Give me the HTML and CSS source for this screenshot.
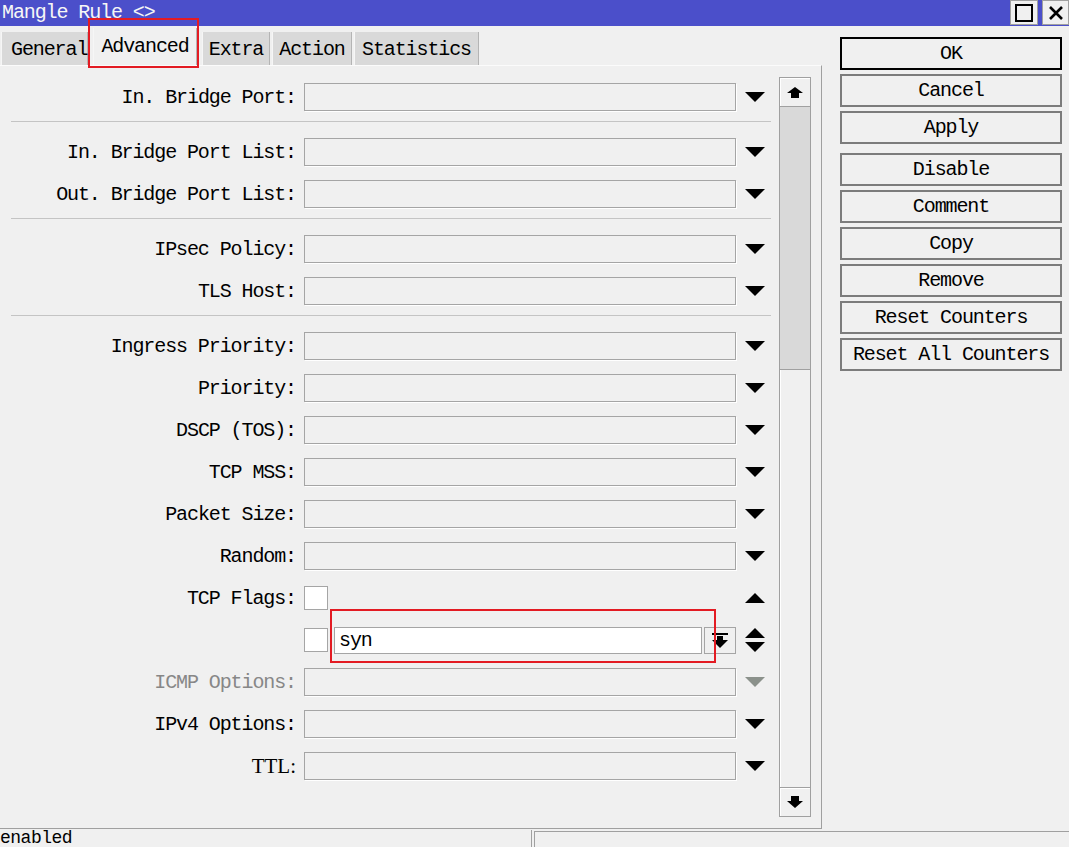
FILE: index.html
```html
<!DOCTYPE html>
<html>
<head>
<meta charset="utf-8">
<title>Mangle Rule</title>
<link rel="stylesheet" href="styles.css">
</head>
<body>
<div class="window">
  <div class="titlebar">
    <span class="title">Mangle Rule &lt;&gt;</span>
    <div class="winbtns">
      <div class="winbtn"><svg width="18" height="18" viewBox="0 0 18 18"><rect x="1" y="1" width="16" height="16" fill="none" stroke="#000" stroke-width="2"/></svg></div>
      <div class="winbtn close"><svg width="16" height="16" viewBox="0 0 16 16"><path d="M2 2L14 14M14 2L2 14" stroke="#000" stroke-width="2.6"/></svg></div>
    </div>
  </div>

  <div class="main">
    <div class="left">
      <div class="tabs">
        <div class="tab t-general">General</div>
        <div class="tab active t-adv">Advanced</div>
        <div class="tab t-extra">Extra</div>
        <div class="tab t-action">Action</div>
        <div class="tab t-stats">Statistics</div>
      </div>
      <div class="panel">
        <div class="form">
          <div class="row"><div class="lbl">In. Bridge Port:</div><div class="field"></div><div class="arr"><span class="tri-down"></span></div></div>
          <div class="sep"></div>
          <div class="row"><div class="lbl">In. Bridge Port List:</div><div class="field"></div><div class="arr"><span class="tri-down"></span></div></div>
          <div class="row"><div class="lbl">Out. Bridge Port List:</div><div class="field"></div><div class="arr"><span class="tri-down"></span></div></div>
          <div class="sep"></div>
          <div class="row"><div class="lbl">IPsec Policy:</div><div class="field"></div><div class="arr"><span class="tri-down"></span></div></div>
          <div class="row"><div class="lbl">TLS Host:</div><div class="field"></div><div class="arr"><span class="tri-down"></span></div></div>
          <div class="sep"></div>
          <div class="row"><div class="lbl">Ingress Priority:</div><div class="field"></div><div class="arr"><span class="tri-down"></span></div></div>
          <div class="row"><div class="lbl">Priority:</div><div class="field"></div><div class="arr"><span class="tri-down"></span></div></div>
          <div class="row"><div class="lbl">DSCP (TOS):</div><div class="field"></div><div class="arr"><span class="tri-down"></span></div></div>
          <div class="row"><div class="lbl">TCP MSS:</div><div class="field"></div><div class="arr"><span class="tri-down"></span></div></div>
          <div class="row"><div class="lbl">Packet Size:</div><div class="field"></div><div class="arr"><span class="tri-down"></span></div></div>
          <div class="row"><div class="lbl">Random:</div><div class="field"></div><div class="arr"><span class="tri-down"></span></div></div>
          <div class="row"><div class="lbl">TCP Flags:</div><div class="check"></div><div class="spacer"></div><div class="arr"><span class="tri-up"></span></div></div>
          <div class="row"><div class="lbl"></div><div class="check"></div><div class="text-input">syn</div><div class="mini-btn"><svg width="16" height="15" viewBox="0 0 16 15"><rect x="0" y="0" width="16" height="2"/><rect x="5" y="3" width="6" height="4"/><polygon points="0,7 16,7 8,15"/></svg></div><div class="arr"><span class="updown"><span class="tri-up"></span><span class="tri-down"></span></span></div></div>
          <div class="row disabled"><div class="lbl">ICMP Options:</div><div class="field"></div><div class="arr"><span class="tri-down"></span></div></div>
          <div class="row"><div class="lbl">IPv4 Options:</div><div class="field"></div><div class="arr"><span class="tri-down"></span></div></div>
          <div class="row"><div class="lbl serif">TTL:</div><div class="field"></div><div class="arr"><span class="tri-down"></span></div></div>
        </div>
        <div class="scroll">
          <div class="sbtn"><svg width="16" height="11" viewBox="0 0 16 11"><polygon points="8,0 16,6 12,6 12,11 4,11 4,6 0,6"/></svg></div>
          <div class="track"><div class="track-top"></div><div class="thumb"></div></div>
          <div class="sbtn"><svg width="16" height="12" viewBox="0 0 16 12"><polygon points="4,0 12,0 12,5 16,5 8,12 0,5 4,5"/></svg></div>
        </div>
      </div>
    </div>
    <div class="btns">
      <div class="btn default">OK</div>
      <div class="btn">Cancel</div>
      <div class="btn">Apply</div>
      <div class="btn group">Disable</div>
      <div class="btn">Comment</div>
      <div class="btn">Copy</div>
      <div class="btn">Remove</div>
      <div class="btn">Reset Counters</div>
      <div class="btn">Reset All Counters</div>
    </div>
  </div>

  <div class="status">
    <div class="seg seg-left">enabled</div>
    <div class="seg seg-right"></div>
  </div>

  <div class="mark mark-tab"></div>
  <div class="mark mark-syn"></div>
</div>
</body>
</html>
```

FILE: styles.css
```css
* { box-sizing: border-box; }
html, body { margin: 0; padding: 0; }
body {
  width: 1069px;
  height: 847px;
  overflow: hidden;
  background: #f0f0f0;
  font-family: "Liberation Mono", "DejaVu Sans Mono", monospace;
  font-size: 20px;
  letter-spacing: -1.1px;
  color: #000;
}
.window {
  position: relative;
  width: 1069px;
  height: 847px;
  display: flex;
  flex-direction: column;
}

/* title bar */
.titlebar {
  flex: none;
  height: 26px;
  background: #4b4fca;
  display: flex;
  justify-content: space-between;
}
.title {
  color: #f6f6f6;
  padding-left: 2px;
  line-height: 25px;
}
.winbtns { display: flex; gap: 4px; }
.winbtn {
  width: 28px;
  height: 25px;
  background: #f0f0f0;
  border: 1px solid #a0a0a0;
  display: flex;
  align-items: center;
  justify-content: center;
}
.winbtn.close { width: 27px; }

/* main area */
.main { flex: none; height: 803px; display: flex; }
.left { width: 822px; display: flex; flex-direction: column; }

.tabs {
  height: 39px;
  display: flex;
  align-items: flex-end;
  padding-left: 1px;
}
.tab {
  height: 33px;
  background: #d9d9d9;
  border-left: 1px solid #f6f6f6;
  border-right: 1px solid #b4b4b4;
  line-height: 36px;
  text-align: center;
}
.tab.active {
  height: 37px;
  background: #f0f0f0;
  line-height: 38px;
}
.t-general { width: 87px; text-align: left; padding-left: 9px; }
.t-adv { width: 104px; margin-left: 5px; }
.t-extra { width: 68px; margin-left: 5px; }
.t-action { width: 80px; margin-left: 2px; }
.t-stats { width: 125px; margin-left: 2px; }

.panel {
  height: 764px;
  border-top: 1px solid #fbfbfb;
  border-right: 1px solid #a0a0a0;
  border-bottom: 1px solid #a0a0a0;
  display: flex;
}
.form { width: 779px; padding-top: 10px; }

.row { height: 42px; display: flex; align-items: center; }
.lbl { width: 296px; flex: none; text-align: right; white-space: nowrap; padding-top: 1px; }
.lbl.serif {
  font-family: "Liberation Serif", serif;
  font-size: 21px;
  letter-spacing: 0;
}
.disabled .lbl { color: #878787; }
.field {
  flex: none;
  margin-left: 8px;
  width: 432px;
  height: 28px;
  border: 1px solid #a5a5a5;
  box-shadow: 1px 1px 0 #fff;
}
.arr {
  flex: none;
  width: 43px;
  padding-left: 9px;
  display: flex;
  align-items: center;
}
.spacer { flex: none; width: 408px; }
.tri-down {
  display: block;
  width: 0;
  height: 0;
  border-left: 10px solid transparent;
  border-right: 10px solid transparent;
  border-top: 10px solid #000;
}
.tri-up {
  display: block;
  width: 0;
  height: 0;
  border-left: 10px solid transparent;
  border-right: 10px solid transparent;
  border-bottom: 10px solid #000;
}
.disabled .tri-down { border-top-color: #8b918b; }
.updown { display: flex; flex-direction: column; gap: 4px; }

.check {
  flex: none;
  margin-left: 8px;
  width: 24px;
  height: 24px;
  background: #fff;
  border: 1px solid #a5a5a5;
}
.text-input {
  flex: none;
  margin-left: 6px;
  width: 368px;
  height: 27px;
  background: #fff;
  border: 1px solid #a5a5a5;
  padding-left: 4px;
  line-height: 26px;
}
.mini-btn {
  flex: none;
  margin-left: 2px;
  width: 32px;
  height: 27px;
  border: 1px solid #a5a5a5;
  display: flex;
  align-items: center;
  justify-content: center;
}

.sep {
  margin: 3px 0 9px 11px;
  width: 760px;
  height: 1px;
  background: #c4c4c4;
}

/* scrollbar */
.scroll {
  flex: none;
  margin-top: 11px;
  width: 32px;
  height: 740px;
  display: flex;
  flex-direction: column;
}
.sbtn {
  flex: none;
  height: 30px;
  border: 1px solid #a0a0a0;
  box-shadow: inset 1px 1px 0 #fff;
  display: flex;
  align-items: center;
  justify-content: center;
}
.track {
  flex: 1;
  display: flex;
  flex-direction: column;
  border-left: 1px solid #a0a0a0;
  border-right: 1px solid #a0a0a0;
}
.track-top { height: 263px; background: #d9d9d9; border-bottom: 1px solid #a0a0a0; }
.thumb { flex: 1; background: #f0f0f0; box-shadow: inset 1px 0 0 #fff; }

/* right buttons */
.btns {
  margin-left: 18px;
  padding-top: 11px;
  width: 222px;
  display: flex;
  flex-direction: column;
  gap: 4px;
}
.btn {
  height: 33px;
  border: 2px solid #7c7c7c;
  text-align: center;
  line-height: 30px;
  white-space: nowrap;
}
.btn.default { border-color: #000; }
.btn.group { margin-top: 5px; }

/* status bar */
.status { flex: none; height: 18px; display: flex; }
.seg-left {
  width: 532px;
  border-right: 1px solid #a0a0a0;
  margin-top: 1px;
  line-height: 17px;
  font-size: 18px;
  letter-spacing: -0.5px;
}
.seg-right {
  flex: 1;
  margin-left: 2px;
  margin-top: 2px;
  border-top: 1px solid #a0a0a0;
  border-left: 1px solid #a0a0a0;
}

/* red annotation boxes */
.mark {
  position: absolute;
  border: 2px solid #e31b23;
}
.mark-tab { left: 88px; top: 18px; width: 111px; height: 50px; }
.mark-syn { left: 330px; top: 609px; width: 386px; height: 54px; }
```
